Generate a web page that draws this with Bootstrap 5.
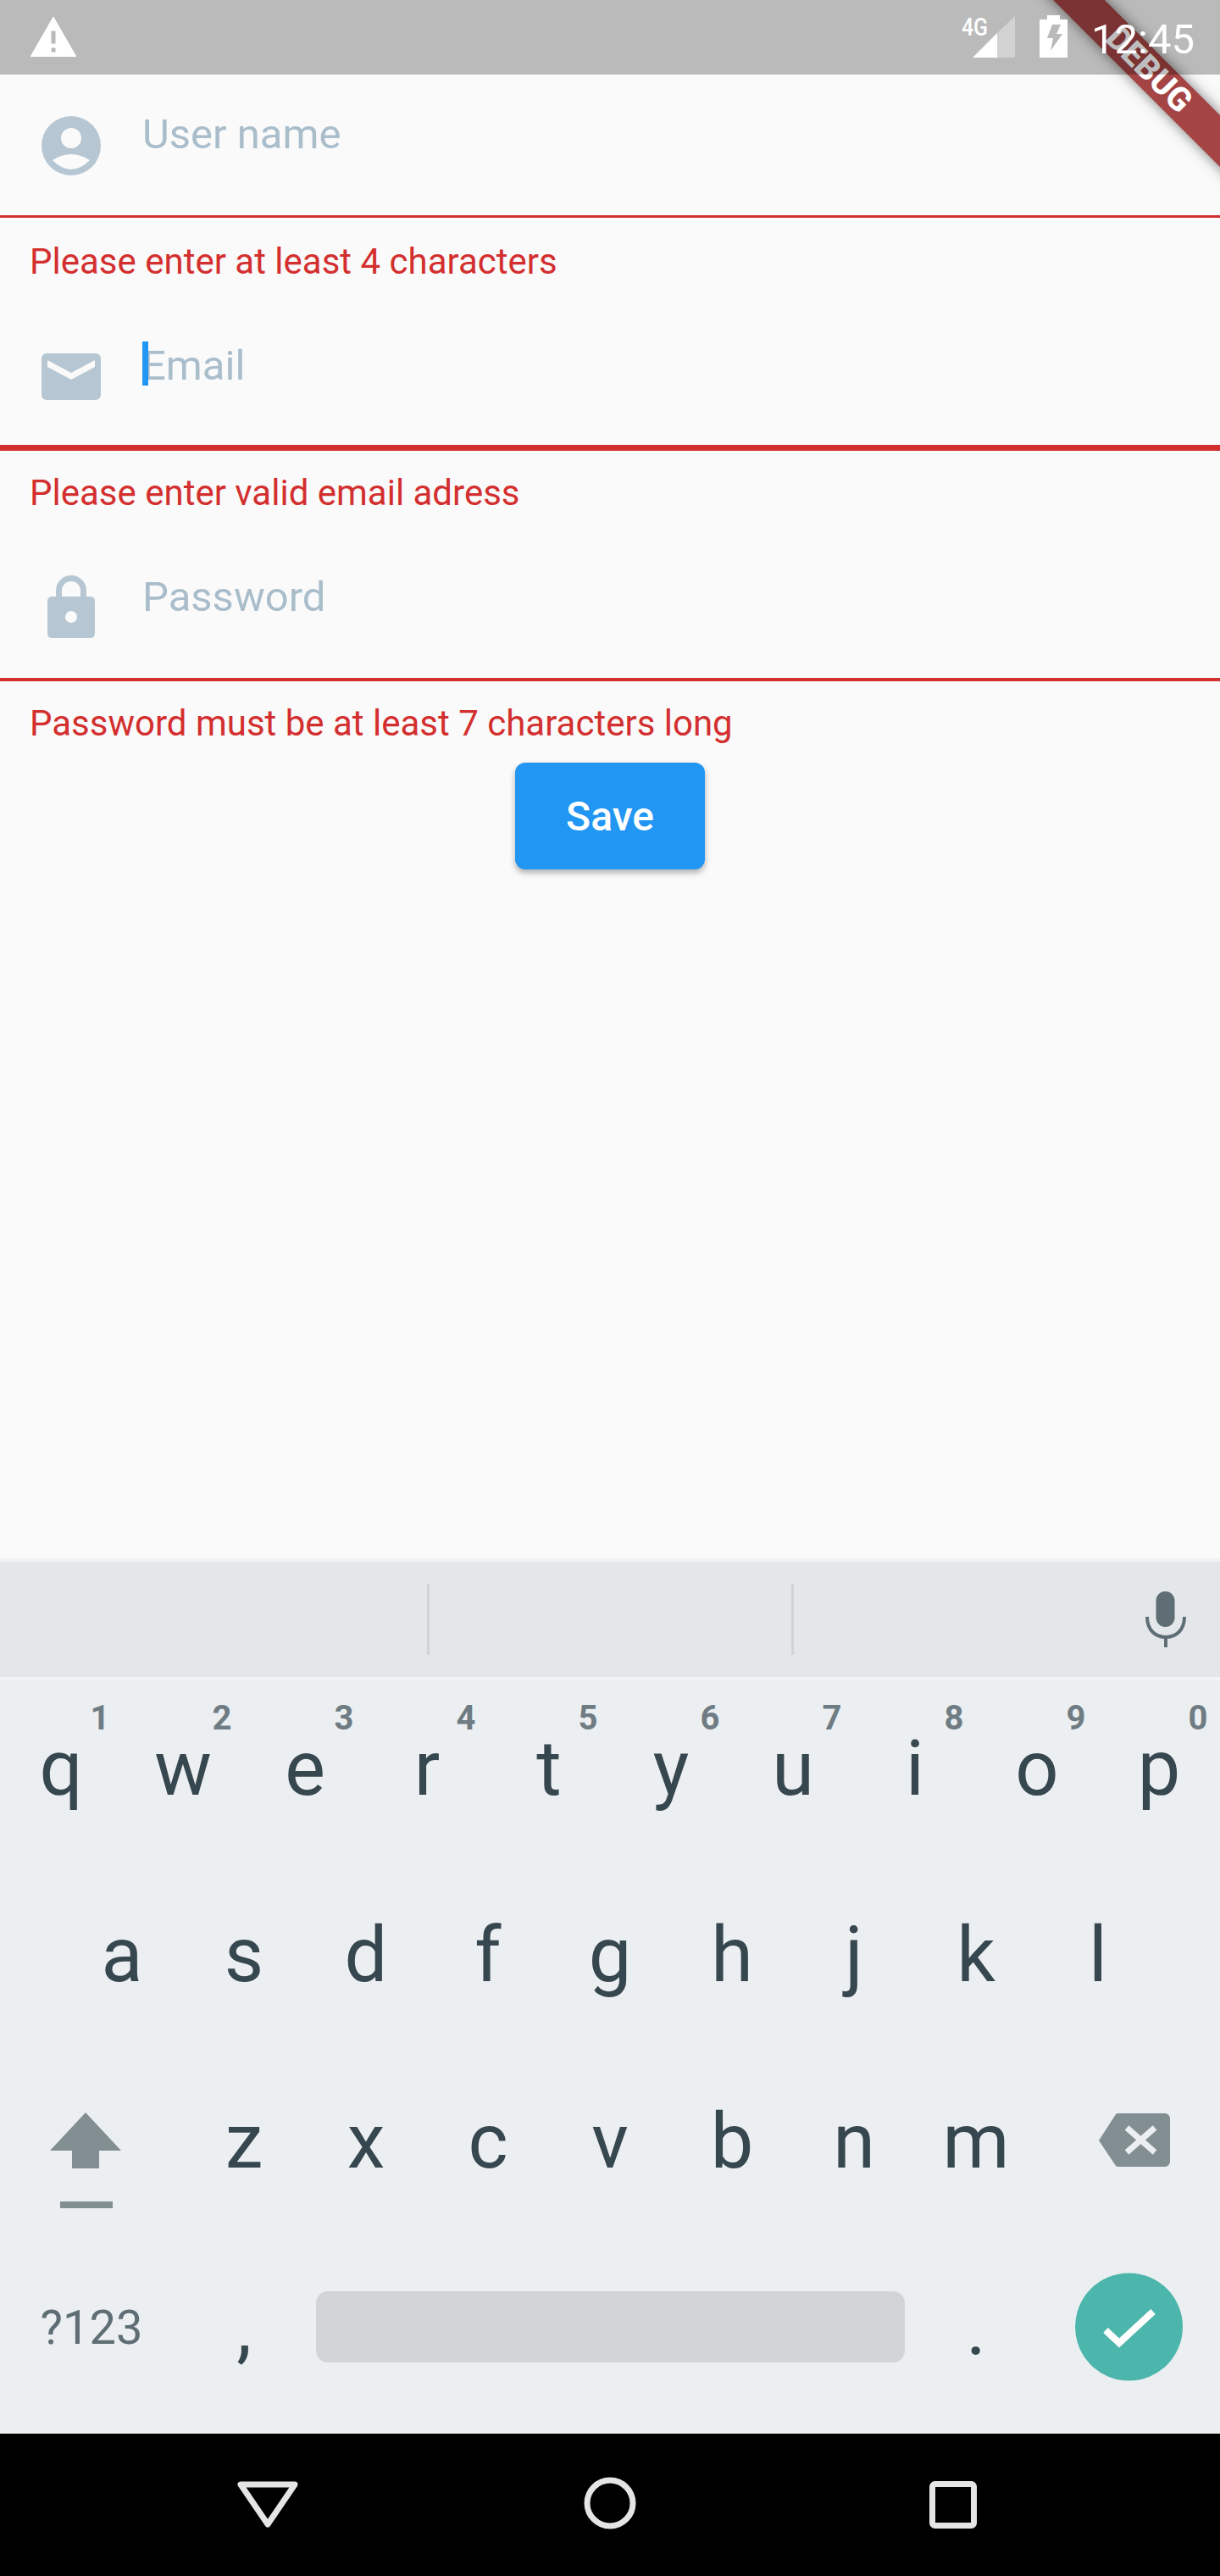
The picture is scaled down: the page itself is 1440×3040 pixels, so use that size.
<!DOCTYPE html>
<html lang="en">
<head>
  <meta charset="UTF-8">
  <title>Form validation</title>
  <link href="https://cdn.jsdelivr.net/npm/bootstrap@5.3.0/dist/css/bootstrap.min.css" rel="stylesheet">
  <style>
    body { background: #fafafa; font-family: Roboto, "Liberation Sans", sans-serif; }
    .phone { width: 1440px; height: 3040px; overflow: hidden; }

    .status-strip { height: 88px; background: rgba(0,0,0,.256); z-index: 2; color: #fff; padding: 0 30px 0 36px; }
    .warn-ico { margin-top: 20px; }
    .net-ico { margin-top: 15px; }
    .batt-ico { margin: 18px 0 0 29px; }
    .clock { font-size: 49px; line-height: 1; margin-left: 28px; margin-top: 22px; }
    .ribbon { left: 1156px; top: 61px; width: 400px; height: 43px; transform: rotate(45deg); background: #a54444; box-shadow: 0 0 16px rgba(0,0,0,.5); color: #fff; font-size: 39px; font-weight: 800; line-height: 43px; z-index: 1; }

    .fld { padding-top: 43px; border-bottom: 3px solid #d32f2f; }
    .fld-a { height: 169px; }
    .fld-b { height: 171px; border-bottom-width: 7px; }
    .fld-c { height: 170px; border-bottom-width: 4px; }
    .fld-ico { margin: 6px 49px 0; flex: none; display: block; }
    .fld-ico-lock { margin-top: 2px; }
    .fld-text { font-size: 49px; line-height: 56px; color: #a9bdcb; }
    .caret-bar { left: 0; top: -1px; width: 7px; height: 52px; background: #2196f3; }

    .err { padding-left: 35px; font-size: 42px; line-height: 49px; color: #d32f2f; }
    .err-a { height: 104px; padding-top: 27px; }
    .err-b { height: 102px; padding-top: 25px; }
    .err-c { height: 96px; padding-top: 25px; }

    .save-btn, .save-btn:hover { width: 224px; height: 126px; padding: 2px 0 0; background: #2196f3; border: 0; border-radius: 12px; box-shadow: 0 4px 7px rgba(0,0,0,.3); color: #fff; font-size: 48px; font-weight: 500; }

    .suggest { height: 144px; background: #e3e7ea; border-top: 4px solid #f1f3f4; border-bottom: 4px solid #f2f5f6; }
    .sg-a { width: 504px; }
    .sg-b { width: 427px; }
    .sg-sep { width: 3px; height: 84px; background: #cfd3d6; }
    .mic-ico { margin-right: 40px; }

    .keys { height: 889px; padding-top: 9px; background: #eceff1; color: #37474f; }
    .key-row { display: grid; grid-template-columns: repeat(20, 72px); height: 220px; }
    .key { grid-column: span 2; padding-bottom: 28px; font-size: 90px; line-height: 1; }
    .key-one { grid-column: 2 / span 2; }
    .key-wide { grid-column: span 3; padding: 0; }
    .digit { left: 118px; top: 16px; width: 28px; margin-left: -14px; text-align: center; font-size: 40px; line-height: 40px; font-weight: 700; color: #6f7c83; }
    .sym-key { font-size: 56px; color: #5f6d74; padding-bottom: 30px; }
    .space-key { grid-column: span 10; padding: 52px 12px 0 13px; }
    .space-bar { height: 84px; background: #d1d5d8; border-radius: 14px; }

    .soft-nav { height: 168px; background: #000; }
  </style>
</head>
<body>
  <div class="phone position-relative d-flex flex-column">

    <div class="ribbon position-absolute text-center">DEBUG</div>

    <div class="status-strip position-relative d-flex align-items-start">
      <svg width="54" height="47" viewBox="0 0 54 47" class="me-auto warn-ico">
        <path d="M27 0 L54 47 H0 Z M24 16 V32 H30 V16 Z M24 36 V42 H30 V36 Z" fill="#fff" fill-rule="evenodd" stroke="#fff" stroke-width="1" stroke-linejoin="round"/>
      </svg>
      <svg width="63" height="56" viewBox="0 0 63 56" class="net-ico">
        <text x="0" y="27" font-family="Roboto" font-size="29" font-weight="500" fill="#fff" textLength="31" lengthAdjust="spacingAndGlyphs">4G</text>
        <polygon points="13,53 42,24 42,53" fill="#fff"/>
        <polygon points="42,24 63,4 63,53 42,53" fill="#fff" fill-opacity=".35"/>
      </svg>
      <svg width="33" height="50" viewBox="0 0 33 50" class="batt-ico">
        <path d="M9 0 H24 V5 H33 V50 H0 V5 H9 Z" fill="#fff"/>
        <polygon points="15,11 25,11 20,22 27,22 13,42 16,27 9,27" fill="#bababa"/>
      </svg>
      <div class="clock">12:45</div>
    </div>

    <form class="flex-grow-1">
      <div class="fld fld-a d-flex">
        <svg class="fld-ico" width="70" height="70" viewBox="0 0 70 70">
          <circle cx="35" cy="35" r="35" fill="#b6c7d3"/>
          <circle cx="35" cy="26" r="12" fill="#fafafa"/>
          <path d="M13 52 Q35 38 57 52 Q35 74 13 52 Z" fill="#fafafa"/>
        </svg>
        <div class="fld-text">User name</div>
      </div>
      <div class="err err-a">Please enter at least 4 characters</div>

      <div class="fld fld-b d-flex">
        <svg class="fld-ico" width="70" height="70" viewBox="0 0 70 70">
          <rect x="0" y="7" width="70" height="55" rx="6" fill="#b6c7d3"/>
          <polygon points="7,15 35,30 63,15 63,23 35,38 7,23" fill="#fafafa"/>
        </svg>
        <div class="fld-text position-relative">Email<span class="caret-bar position-absolute"></span></div>
      </div>
      <div class="err err-b">Please enter valid email adress</div>

      <div class="fld fld-c d-flex">
        <svg class="fld-ico fld-ico-lock" width="70" height="74" viewBox="0 0 70 74">
          <path d="M20.500 28 V18 a14.500 14.500 0 0 1 29 0 V28" fill="none" stroke="#b6c7d3" stroke-width="7"/>
          <rect x="7" y="25" width="56" height="49" rx="5" fill="#b6c7d3"/>
          <circle cx="35" cy="49" r="7" fill="#fafafa"/>
        </svg>
        <div class="fld-text">Password</div>
      </div>
      <div class="err err-c">Password must be at least 7 characters long</div>

      <button type="button" class="btn save-btn d-block mx-auto">Save</button>
    </form>

    <div class="suggest d-flex align-items-center">
      <div class="sg-a"></div>
      <div class="sg-sep"></div>
      <div class="sg-b"></div>
      <div class="sg-sep"></div>
      <svg width="48" height="66" viewBox="0 0 48 66" class="ms-auto mic-ico">
        <rect x="12.500" y="0" width="22" height="42" rx="11" fill="#5f6e75"/>
        <path d="M2 30 C2 46 12 54 24 54 C36 54 46 46 46 30" fill="none" stroke="#5f6e75" stroke-width="4"/>
        <rect x="22" y="52" width="4" height="14" fill="#5f6e75"/>
      </svg>
    </div>

    <div class="keys">
      <div class="key-row">
        <div class="key position-relative d-flex align-items-center justify-content-center">q<span class="digit position-absolute">1</span></div>
        <div class="key position-relative d-flex align-items-center justify-content-center">w<span class="digit position-absolute">2</span></div>
        <div class="key position-relative d-flex align-items-center justify-content-center">e<span class="digit position-absolute">3</span></div>
        <div class="key position-relative d-flex align-items-center justify-content-center">r<span class="digit position-absolute">4</span></div>
        <div class="key position-relative d-flex align-items-center justify-content-center">t<span class="digit position-absolute">5</span></div>
        <div class="key position-relative d-flex align-items-center justify-content-center">y<span class="digit position-absolute">6</span></div>
        <div class="key position-relative d-flex align-items-center justify-content-center">u<span class="digit position-absolute">7</span></div>
        <div class="key position-relative d-flex align-items-center justify-content-center">i<span class="digit position-absolute">8</span></div>
        <div class="key position-relative d-flex align-items-center justify-content-center">o<span class="digit position-absolute">9</span></div>
        <div class="key position-relative d-flex align-items-center justify-content-center">p<span class="digit position-absolute">0</span></div>
      </div>
      <div class="key-row">
        <div class="key key-one d-flex align-items-center justify-content-center">a</div>
        <div class="key d-flex align-items-center justify-content-center">s</div>
        <div class="key d-flex align-items-center justify-content-center">d</div>
        <div class="key d-flex align-items-center justify-content-center">f</div>
        <div class="key d-flex align-items-center justify-content-center">g</div>
        <div class="key d-flex align-items-center justify-content-center">h</div>
        <div class="key d-flex align-items-center justify-content-center">j</div>
        <div class="key d-flex align-items-center justify-content-center">k</div>
        <div class="key d-flex align-items-center justify-content-center">l</div>
      </div>
      <div class="key-row">
        <div class="key key-wide">
          <svg width="216" height="220" viewBox="0 0 216 220" class="d-block">
            <polygon points="101,61 143,106 117,106 117,127 85,127 85,106 59,106" fill="#838e93"/>
            <rect x="71" y="166" width="62" height="8" fill="#838e93"/>
          </svg>
        </div>
        <div class="key d-flex align-items-center justify-content-center">z</div>
        <div class="key d-flex align-items-center justify-content-center">x</div>
        <div class="key d-flex align-items-center justify-content-center">c</div>
        <div class="key d-flex align-items-center justify-content-center">v</div>
        <div class="key d-flex align-items-center justify-content-center">b</div>
        <div class="key d-flex align-items-center justify-content-center">n</div>
        <div class="key d-flex align-items-center justify-content-center">m</div>
        <div class="key key-wide">
          <svg width="216" height="220" viewBox="0 0 216 220" class="d-block">
            <path d="M96 62 H151 a6 6 0 0 1 6 6 V119 a6 6 0 0 1 -6 6 H96 a4 4 0 0 1 -3 -1 L73 94 L93 63 a4 4 0 0 1 3 -1 Z" fill="#838e93"/>
            <path d="M106 79 L139 108 M139 79 L106 108" stroke="#eceff1" stroke-width="7" fill="none"/>
          </svg>
        </div>
      </div>
      <div class="key-row">
        <div class="key key-wide sym-key d-flex align-items-center justify-content-center">?123</div>
        <div class="key d-flex align-items-center justify-content-center">,</div>
        <div class="key space-key"><div class="space-bar"></div></div>
        <div class="key d-flex align-items-center justify-content-center">.</div>
        <div class="key key-wide">
          <svg width="216" height="220" viewBox="0 0 216 220" class="d-block">
            <circle cx="108.500" cy="94" r="63.500" fill="#4db6ac"/>
            <path d="M81 98 L97 113 L137 76" fill="none" stroke="#fff" stroke-width="8"/>
          </svg>
        </div>
      </div>
    </div>

    <div class="soft-nav d-flex position-relative">
      <svg width="1440" height="168" viewBox="0 0 1440 168">
        <path d="M284 60 H348 L316 107 Z" fill="none" stroke="#e5e5e5" stroke-width="7" stroke-linejoin="round"/>
        <circle cx="720" cy="82" r="27" fill="none" stroke="#e5e5e5" stroke-width="7"/>
        <rect x="1100.500" y="59.500" width="49" height="49" rx="3" fill="none" stroke="#e5e5e5" stroke-width="7"/>
      </svg>
    </div>
  </div>
  <script src="https://cdn.jsdelivr.net/npm/bootstrap@5.3.0/dist/js/bootstrap.bundle.min.js"></script>
</body>
</html>
